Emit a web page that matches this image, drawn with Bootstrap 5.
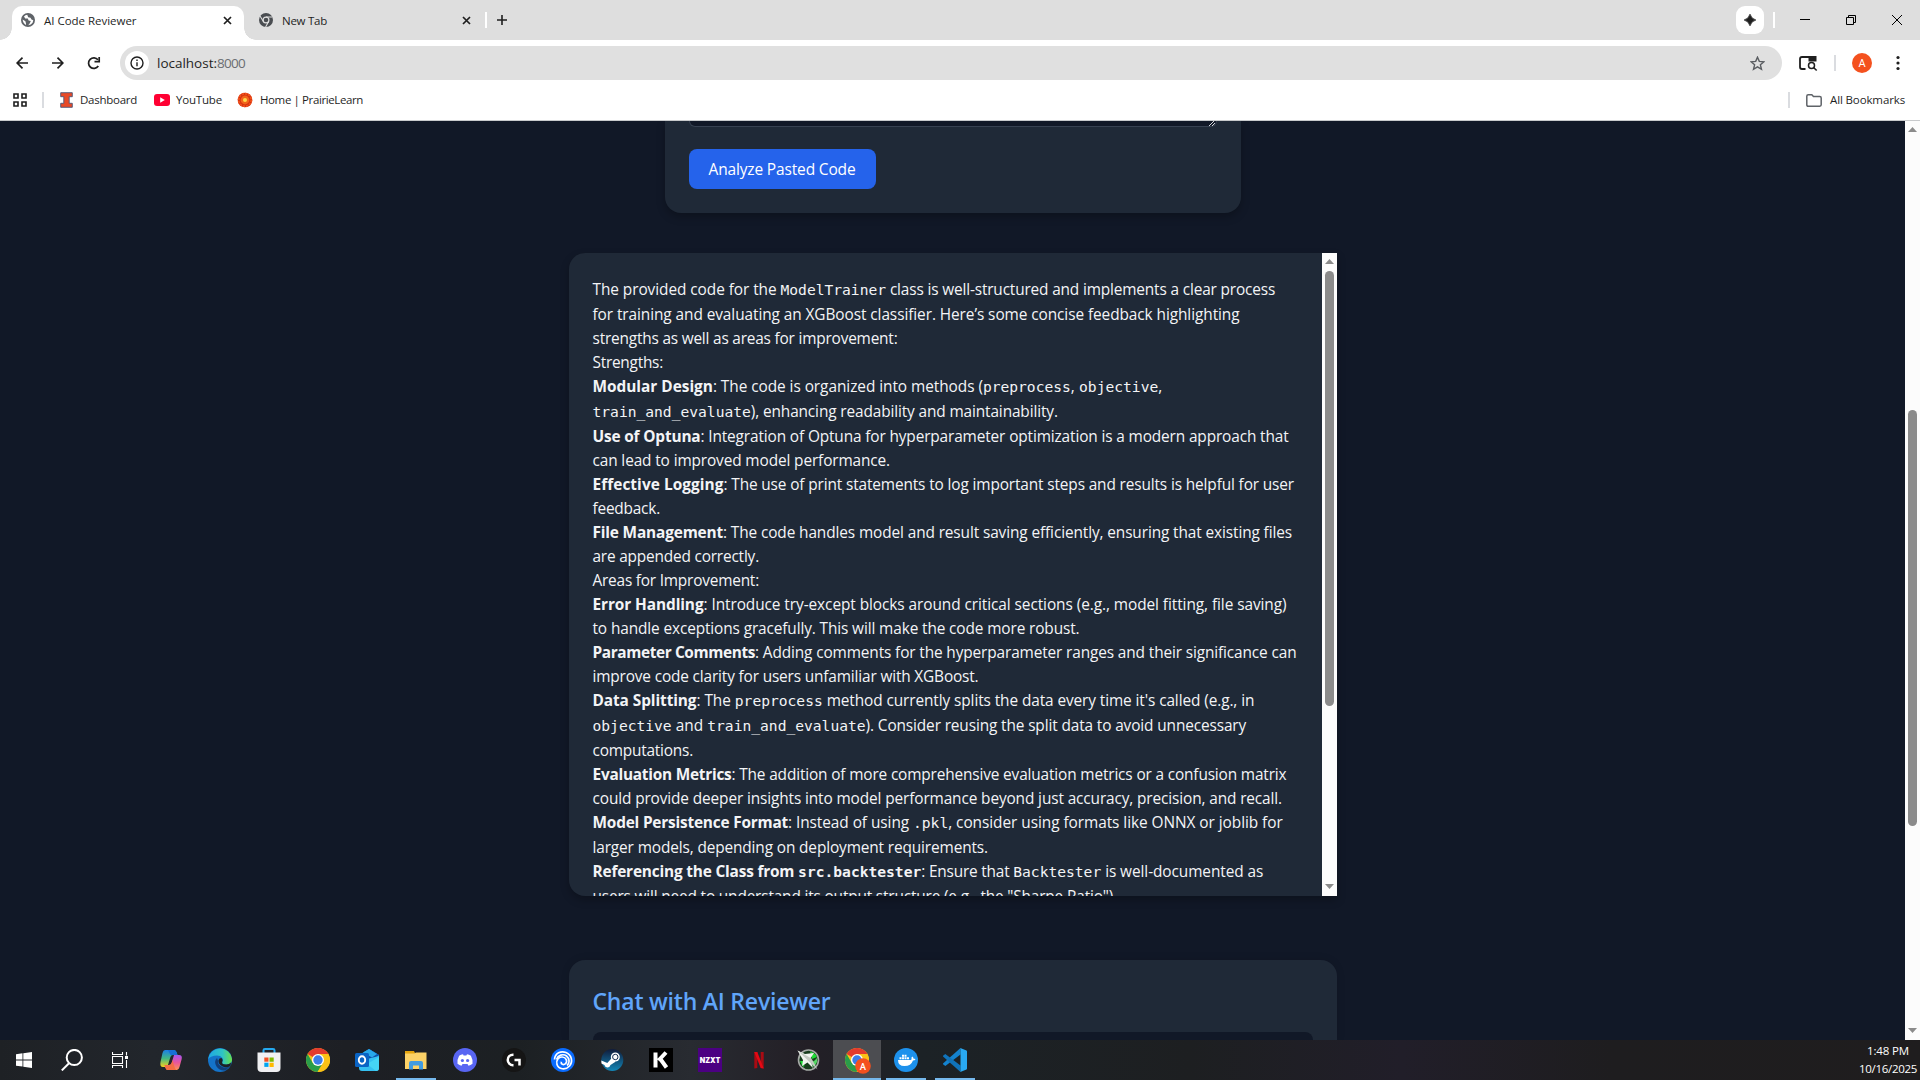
<!DOCTYPE html>
<html lang="en">
<head>
<meta charset="utf-8">
<title>AI Code Reviewer</title>
<link href="https://cdn.jsdelivr.net/npm/bootstrap@5.3.0/dist/css/bootstrap.min.css" rel="stylesheet">
<style>
body{width:1920px;height:1080px;overflow:hidden;font-family:"Open Sans","Noto Sans",sans-serif;background:#111827;line-height:1}
svg{display:block;flex:none}
[data-w]{white-space:pre}
/* browser chrome */
.tabstrip{height:40px;background:#dedede;padding-left:12px;font-size:11.5px;color:#1f1f1f}
.tab-on{position:relative;width:232px;height:34px;margin-top:6px;background:#fff;border-radius:10px 10px 0 0;padding:0 12px 6px 9px}
.tab-on::before,.tab-on::after{content:"";position:absolute;bottom:0;width:12px;height:12px}
.tab-on::before{left:-12px;background:radial-gradient(circle at 0 0,#dedede 11.5px,#fff 12px)}
.tab-on::after{right:-12px;background:radial-gradient(circle at 100% 0,#dedede 11.5px,#fff 12px)}
.tab-off{width:241px;height:34px;margin-top:6px;padding:0 14px 6px 15px}
.tab-name{margin-left:9px;padding-top:1px}
.vbar{width:2px;height:16px;background:#dadce0;flex:none}
.spark{width:28px;height:28px;border-radius:9px;background:#fff}
.toolbar-row{height:46px;background:#fff;padding-left:14px;color:#1f1f1f}
.omni{width:1662px;height:34px;border-radius:17px;background:#e0e0e0;padding:0 17px 0 5px;margin-left:18px;font-size:13.5px}
.info-dot{width:24px;height:24px;border-radius:50%;background:#fff;margin-right:8px}
.bookmarks{height:34px;background:#fff;padding:0 15px 6px 13px;font-size:11.5px;color:#1f1f1f}
.chrome-line{height:1px;background:#c8cacc}
/* page */
.view{height:919px}
.surface{background:#1f2937;box-shadow:0 4px 8px rgba(0,0,0,.25)}
.paste-card{width:576px;height:92px;margin-left:664.5px;border-radius:0 0 16px 16px;padding:0 24px}
.paste-area{width:528px;height:6px;background:#111827;border:1px solid #374151;border-top:0;border-radius:0 0 8px 8px}
.btn-go{width:187px;height:40px;margin-top:22px;border-radius:8px;background:#2563eb;color:#fff;font-size:15.5px;line-height:1;padding:1px 0 0;border:0}
.btn-go:hover{background:#2563eb;color:#fff}
.review{width:768px;height:643px;margin:40px 0 0 568.5px;border-radius:16px 0 0 16px;overflow:hidden}
.prose-box{padding:24px 0 0 24px;font-size:15.4px;color:#f3f4f6}
.ln{height:24px;line-height:26px;white-space:pre}
.ln-c{height:25px;line-height:25px}
.ln code{font-family:"DejaVu Sans Mono",monospace;font-size:14.62px;color:inherit;line-height:1}
.sbar{width:15px;background:#fcfcfc;flex:none}
.thumb{width:9px;border-radius:5px;background:#8b8b8b}
.chat{width:768px;height:81px;margin:64px 0 0 568.5px;border-radius:16px 16px 0 0;padding:24px 24px 0;box-shadow:0 0 8px rgba(0,0,0,.12)}
.chat-title{font-size:23px;font-weight:600;color:#60a5fa;line-height:34px;height:48px;margin:0}
.chat-log{height:9px;background:#111827;border-radius:8px 8px 0 0}
/* taskbar */
.taskbar{height:40px;background:linear-gradient(90deg,#1e2125 0,#22262c 8%,#1d1f24 18%,#1c2023 27%,#282b31 36%,#231f26 42%,#1c2226 48%,#1d1f21 62%,#211e29 73%,#1e1d1f 84%,#1f1d1e);color:#fff}
.task{width:48px;height:40px;flex:none}
.run{border-bottom:2px solid #76b9ed;width:40px;margin:0 4px}
.run svg{margin-top:2px}
.active-app{width:48px;margin:0;background:#4c4d51}
.clock{font-size:11.5px;padding:2px 3px 0 0}
.clock div{height:18px;line-height:18px}
</style>
</head>
<body class="d-flex flex-column">
<svg width="0" height="0" class="position-absolute">
<defs>
<linearGradient id="cpB" x2="0" y2="1"><stop stop-color="#a655f0"/><stop offset=".5" stop-color="#e9559b"/><stop offset="1" stop-color="#ff9350"/></linearGradient>
<linearGradient id="cpC" x2="0" y2="1"><stop stop-color="#1b7ee8"/><stop offset=".5" stop-color="#42b883"/><stop offset="1" stop-color="#f5d11e"/></linearGradient>
<linearGradient id="edA" x2="1"><stop stop-color="#1fa7e3"/><stop offset=".6" stop-color="#2fc4c4"/><stop offset="1" stop-color="#6be04a"/></linearGradient>
<linearGradient id="stm" x2="0" y2="1"><stop stop-color="#101b3a"/><stop offset="1" stop-color="#1387b8"/></linearGradient>
<symbol id="chrome" viewBox="0 0 24 24"><circle cx="12" cy="12" r="12" fill="#fbc116"/><path d="M12 12 1.6 6A12 12 0 0 1 22.4 6H12Z" fill="#e33b2e"/><path d="M1.6 6A12 12 0 0 0 11.5 24L17.2 15 12 12 6.8 15Z" fill="#2a9d4a"/><path d="M12 6.2H22.5A12 12 0 0 1 11.6 24L17 15Z" fill="#fbc116"/><circle cx="12" cy="12" r="6" fill="#fff"/><circle cx="12" cy="12" r="4.7" fill="#3b7de9"/></symbol>
</defs>
</svg>

<header>
 <div class="tabstrip d-flex align-items-start">
  <div class="tab-on d-flex align-items-center">
   <svg width="14" height="14" viewBox="0 0 14 14"><circle cx="7" cy="7" r="7" fill="#5f6368"/><path d="M6.200 1.800Q4.300 2 3 3.600L4.200 5.400 6.800 5.600 7.600 7.600 9.800 8 8.800 10.200 7.200 12.200Q10 12 11.600 9.800L12.300 7.200 10.500 6.600 9.500 4.800 7.200 4.200ZM1.600 6.600 4.400 8.200 5 10.400 5 12Q2 10.600 1.600 6.600Z" fill="#fff"/></svg>
   <span class="tab-name"><span data-w="92.5">AI Code Reviewer</span></span>
   <svg class="ms-auto" width="9" height="9" viewBox="0 0 9 9"><path d="m1 1 7 7M8 1 1 8" stroke="#1f1f1f" stroke-width="1.7"/></svg>
  </div>
  <div class="tab-off d-flex align-items-center">
   <svg width="14" height="14" viewBox="0 0 14 14"><circle cx="7" cy="7" r="7" fill="#4a4d51"/><circle cx="7" cy="7" r="2.9" fill="none" stroke="#dedede" stroke-width="1.2"/><path d="M7 4H13.4M4.4 8.5 1 3M9.6 8.5 6.6 14" stroke="#dedede" stroke-width="1.1"/></svg>
   <span class="tab-name"><span data-w="45">New Tab</span></span>
   <svg class="ms-auto" width="9" height="9" viewBox="0 0 9 9"><path d="m1 1 7 7M8 1 1 8" stroke="#1f1f1f" stroke-width="1.7"/></svg>
  </div>
  <div class="d-flex align-items-center h-100">
   <i class="vbar bg-white"></i>
   <svg class="ms-2" width="14" height="12" viewBox="-1.500 0 14 12"><path d="M5.500 1v10M.5 6h10" stroke="#1f1f1f" stroke-width="1.6"/></svg>
  </div>
  <div class="d-flex align-items-center h-100 ms-auto pe-3">
   <span class="spark d-flex align-items-center justify-content-center"><svg width="14" height="14" viewBox="0 0 14 14"><path d="M7 1.200Q8.200 5.800 12.800 7 8.200 8.200 7 12.800 5.800 8.200 1.200 7 5.800 5.800 7 1.200Z" fill="#1f1f1f" stroke="#1f1f1f" stroke-width=".8"/></svg></span>
   <i class="vbar bg-white" style="margin-left:9px"></i>
   <svg width="129" height="14" viewBox="1775 13 129 14" fill="none" stroke="#000"><path d="M1800 19.5h10M1846.500 17.500h7v7h-7zM1848.500 17.500v-2h7v7h-2M1892 15l10 10M1902 15l-10 10"/></svg>
  </div>
 </div>
 <div class="toolbar-row d-flex align-items-center">
  <svg width="88" height="16" viewBox="14 0 88 16" fill="none" stroke="#1f1f1f" stroke-width="1.7"><path d="M28 8H17.500M22.500 2.700 17.200 8l5.300 5.300M52 8h10.500M57.500 2.700 62.800 8l-5.300 5.300M98.300 11A5.300 5.300 0 1 1 98 4.800"/><path d="M99.200 2v4.700h-4.700"/></svg>
  <div class="omni d-flex align-items-center">
   <span class="info-dot d-flex align-items-center justify-content-center"><svg width="14" height="14" viewBox="0 0 14 14" fill="none" stroke="#1f1f1f" stroke-width="1.4"><circle cx="7" cy="7" r="6"/><path d="M7 6.300v4M7 3.500v1.500"/></svg></span>
   <span class="pt-1" style="margin-top:-2px"><span data-w="60">localhost:</span><span data-w="28" style="color:#6b6e72">8000</span></span>
   <svg class="ms-auto" width="15" height="15" viewBox="0 0 15 15"><path d="m7.500 1.200 1.800 4.200 4.600.4-3.500 3 1.100 4.500-4-2.400-4 2.400 1.100-4.500-3.500-3 4.600-.4Z" fill="none" stroke="#5a5d61" stroke-width="1.400"/></svg>
  </div>
  <svg width="138" height="20" viewBox="1782 53 138 20"><path d="M1805.500 69h-3.500q-2 0-2-2v-8q0-2 2-2h14" fill="none" stroke="#1f1f1f" stroke-width="1.800"/><path d="M1808.500 56h8v5.500h-8z" fill="#1f1f1f"/><circle cx="1811.500" cy="65.500" r="3" fill="#fff" stroke="#1f1f1f" stroke-width="1.500"/><path d="m1813.500 67.500 3.200 3" stroke="#1f1f1f" stroke-width="1.600"/><path d="M1834 55h2v16h-2z" fill="#dadce0"/><circle cx="1862" cy="63" r="10" fill="#f4511e"/><text x="1862" y="67" text-anchor="middle" font-family="Roboto" font-size="11" fill="#fff">A</text><g fill="#1f1f1f"><circle cx="1898" cy="57.500" r="1.600"/><circle cx="1898" cy="63" r="1.600"/><circle cx="1898" cy="68.500" r="1.600"/></g></svg>
 </div>
 <div class="bookmarks d-flex align-items-center">
  <svg width="14" height="14" viewBox="0 0 14 14" fill="none" stroke="#1f1f1f" stroke-width="1.600"><path d="M1 1h4v4H1zM9 1h4v4H9zM1 9h4v4H1zM9 9h4v4H9z"/></svg>
  <i class="vbar" style="margin:0 16px 0 15px"></i>
  <svg width="13" height="16" viewBox="0 0 13 16"><path d="M.7.700h11.600v4H9.200v6.600h3.100v4H.7v-4h3.100V4.700H.7Z" fill="#e84a27" stroke="#4b5677" stroke-width=".9"/></svg>
  <span style="margin-left:7px"><span data-w="57">Dashboard</span></span>
  <svg style="margin-left:17px" width="16" height="12" viewBox="0 0 16 12"><rect width="16" height="12" rx="3" fill="#ff0033"/><path d="m6.200 3.300 4.600 2.700-4.600 2.700Z" fill="#fff"/></svg>
  <span style="margin-left:6px"><span data-w="46">YouTube</span></span>
  <svg style="margin-left:15px" width="16" height="16" viewBox="0 0 16 16"><circle cx="8" cy="8" r="7.300" fill="#d3300f"/><circle cx="8" cy="8" r="6.300" fill="none" stroke="#f0511c" stroke-width="2" stroke-dasharray="2.300 .9"/><circle cx="8" cy="8" r="4.400" fill="#f2641a"/><circle cx="8" cy="8" r="2" fill="#ffd84a"/></svg>
  <span style="margin-left:7px"><span data-w="103">Home | PrairieLearn</span></span>
  <i class="vbar ms-auto" style="margin-right:16px"></i>
  <svg width="16" height="13" viewBox="0 0 16 13"><path d="M.8 2.200Q.8.800 2.200.800h3.600l1.700 1.800h6.300q1.400 0 1.400 1.400v6.800q0 1.400-1.400 1.400H2.200q-1.400 0-1.400-1.400Z" fill="none" stroke="#5f6368" stroke-width="1.500"/></svg>
  <span class="ms-2"><span data-w="75">All Bookmarks</span></span>
 </div>
 <div class="chrome-line"></div>
</header>

<div class="view d-flex overflow-hidden">
 <main class="flex-grow-1">
  <section class="surface paste-card">
   <div class="paste-area d-flex justify-content-end"><svg width="7" height="6" viewBox="0 0 7 6"><path d="M0 5 5 0M3 5l3-3" stroke="#d5d7da"/></svg></div>
   <button class="btn btn-go"><span data-w="147">Analyze Pasted Code</span></button>
  </section>

  <section class="surface review d-flex">
   <div class="prose-box flex-grow-1">
    <div class="ln ln-c"><span data-w="188">The provided code for the </span><code>ModelTrainer</code><span data-w="389"> class is well-structured and implements a clear process</span></div>
    <div class="ln"><span data-w="647">for training and evaluating an XGBoost classifier. Here’s some concise feedback highlighting</span></div>
    <div class="ln"><span data-w="305">strengths as well as areas for improvement:</span></div>
    <div class="ln"><span data-w="70.5">Strengths:</span></div>
    <div class="ln ln-c"><strong data-w="120.4">Modular Design</strong><span data-w="270">: The code is organized into methods (</span><code>preprocess</code><span data-w="8.2">, </span><code>objective</code><span>,</span></div>
    <div class="ln ln-c"><code>train_and_evaluate</code><span data-w="307">), enhancing readability and maintainability.</span></div>
    <div class="ln"><strong data-w="108">Use of Optuna</strong><span data-w="588">: Integration of Optuna for hyperparameter optimization is a modern approach that</span></div>
    <div class="ln"><span data-w="297.500">can lead to improved model performance.</span></div>
    <div class="ln"><strong data-w="131">Effective Logging</strong><span data-w="570.500">: The use of print statements to log important steps and results is helpful for user</span></div>
    <div class="ln"><span data-w="67.500">feedback.</span></div>
    <div class="ln"><strong data-w="130.500">File Management</strong><span data-w="569">: The code handles model and result saving efficiently, ensuring that existing files</span></div>
    <div class="ln"><span data-w="166.500">are appended correctly.</span></div>
    <div class="ln"><span data-w="166.500">Areas for Improvement:</span></div>
    <div class="ln"><strong data-w="111">Error Handling</strong><span data-w="583">: Introduce try-except blocks around critical sections (e.g., model fitting, file saving)</span></div>
    <div class="ln"><span data-w="487">to handle exceptions gracefully. This will make the code more robust.</span></div>
    <div class="ln"><strong data-w="162.500">Parameter Comments</strong><span data-w="541.500">: Adding comments for the hyperparameter ranges and their significance can</span></div>
    <div class="ln"><span data-w="386">improve code clarity for users unfamiliar with XGBoost.</span></div>
    <div class="ln ln-c"><strong data-w="104">Data Splitting</strong><span data-w="38.300">: The </span><code>preprocess</code><span data-w="431.500"> method currently splits the data every time it's called (e.g., in</span></div>
    <div class="ln ln-c"><code>objective</code><span data-w="35.600"> and </span><code>train_and_evaluate</code><span data-w="380.500">). Consider reusing the split data to avoid unnecessary</span></div>
    <div class="ln"><span data-w="100.500">computations.</span></div>
    <div class="ln"><strong data-w="139">Evaluation Metrics</strong><span data-w="555">: The addition of more comprehensive evaluation metrics or a confusion matrix</span></div>
    <div class="ln"><span data-w="689.500">could provide deeper insights into model performance beyond just accuracy, precision, and recall.</span></div>
    <div class="ln ln-c"><strong data-w="195.500">Model Persistence Format</strong><span data-w="125">: Instead of using </span><code>.pkl</code><span data-w="334.500">, consider using formats like ONNX or joblib for</span></div>
    <div class="ln"><span data-w="395.500">larger models, depending on deployment requirements.</span></div>
    <div class="ln ln-c"><strong data-w="205.600">Referencing the Class from </strong><code class="fw-bold">src.backtester</code><span data-w="92">: Ensure that </span><code>Backtester</code><span data-w="162"> is well-documented as</span></div>
    <div class="ln"><span data-w="524.500">users will need to understand its output structure (e.g., the "Sharpe Ratio").</span></div>
   </div>
   <div class="sbar d-flex flex-column align-items-center">
    <svg width="9" height="18" viewBox="0 0 9 18"><path d="M4.500 6 9 11H0Z" fill="#8b8b8b"/></svg>
    <div class="thumb" style="height:435px"></div>
    <svg class="mt-auto" width="9" height="18" viewBox="0 0 9 18"><path d="M4.500 11 9 6H0Z" fill="#8b8b8b"/></svg>
   </div>
  </section>

  <section class="surface chat">
   <h2 class="chat-title"><span data-w="238">Chat with AI Reviewer</span></h2>
   <div class="chat-log"></div>
  </section>
 </main>
 <div class="sbar d-flex flex-column align-items-center">
  <svg width="9" height="18" viewBox="0 0 9 18"><path d="M4.500 6 9 11H0Z" fill="#8b8b8b"/></svg>
  <div class="thumb" style="height:416px;margin-top:271px"></div>
  <svg class="mt-auto" width="9" height="18" viewBox="0 0 9 18"><path d="M4.500 11 9 6H0Z" fill="#8b8b8b"/></svg>
 </div>
</div>

<footer class="taskbar d-flex">
 <div class="d-flex">
  <div class="task d-flex align-items-center justify-content-center"><svg width="16" height="16" viewBox="0 0 16 16" fill="#fff"><path d="M0 2.200 6.500 1.300V7.500H0ZM7.300 1.200 16 0v7.500H7.300ZM0 8.400h6.500v6.200L0 13.700ZM7.300 8.400H16V16l-8.700-1.200Z"/></svg></div>
  <div class="task d-flex align-items-center justify-content-center"><svg width="22" height="22" viewBox="0 0 22 22" fill="none" stroke="#fff" stroke-width="2"><circle cx="13.300" cy="8.500" r="7.600"/><path d="M8 14.200.8 21.400"/></svg></div>
  <div class="task d-flex align-items-center justify-content-center"><svg width="17" height="16" viewBox="0 0 17 16" fill="none" stroke="#fff" stroke-width="1.100"><path d="M.5 0v2.500h10V0M.5 16v-2.500h10V16M.5 4.500h10v7H.5zM14.500 0v3.500M14.500 8v8"/><path d="M13 4h3v3h-3z" fill="#fff" stroke="none"/></svg></div>
 </div>
 <div class="d-flex" style="gap:1px;margin-left:3px">
  <div class="task d-flex align-items-center justify-content-center"><svg width="24" height="24" viewBox="0 0 24 24"><path d="M6 2h9q2 0 2.700 2.500L18.500 7H14q-2 0-2.600 2L9 17q-.7 2-2.500 2H4Q.500 19 1.500 14L3.500 5Q4.300 2 6 2Z" fill="url(#cpC)"/><path d="M9 2h6q2 0 2.700 2.500L18.500 7h-7Z" fill="#166fd6"/><path d="M18 22H9q-2 0-2.700-2.500L5.500 17H10q2 0 2.600-2L15 7h5q3.500 0 2.700 4l-2.200 8q-.8 3-2.500 3Z" fill="url(#cpB)"/><path d="M5.500 17H10q2 0 2.600-2l.9-3 2 7q.5 2 2 3H9q-2 0-2.700-2.500Z" fill="#f46d45"/></svg></div>
  <div class="task d-flex align-items-center justify-content-center"><svg width="24" height="24" viewBox="0 0 24 24"><circle cx="12" cy="12" r="12" fill="#1473c9"/><path d="M.2 11A12 12 0 0 1 24 11q.4 5.500-6 5.500-4.500 0-3.800-2.500 1.500-2 0-4.200Q12.500 7.500 9 7.500 3 7.800.2 11Z" fill="url(#edA)"/><path d="M9 10q-3.500 3.500-.5 8.500 3.500 5 9.500 3.800l4-4q-4 2-7.500.7-5-2-4.500-6.500Z" fill="#123f7a"/><path d="M22.500 18q-4.500 2.300-8.300.3-4.300-2.300-3.700-6 .5-2.300 3-2.300 2 2 .7 4-.7 2.500 4 2.500 3 0 4.800-2Z" fill="#1d2024"/></svg></div>
  <div class="task d-flex align-items-center justify-content-center"><svg width="24" height="24" viewBox="0 0 24 24"><path d="M6.500 5V2.200Q6.500 1 8 1h8q1.500 0 1.500 1.200V5" fill="none" stroke="#25a9ee" stroke-width="2"/><path d="M.500 4.500h23V20q0 4-4 4h-15q-4 0-4-4Z" fill="#f0f0f2"/><path d="M7.300 9.500h4.200v4.200H7.300z" fill="#f25022"/><path d="M12.500 9.500h4.200v4.200h-4.200z" fill="#7fba00"/><path d="M7.300 14.700h4.200v4.200H7.300z" fill="#00a4ef"/><path d="M12.500 14.700h4.200v4.200h-4.200z" fill="#ffb900"/></svg></div>
  <div class="task d-flex align-items-center justify-content-center"><svg width="24" height="24"><use href="#chrome"/></svg></div>
  <div class="task d-flex align-items-center justify-content-center"><svg width="24" height="24" viewBox="0 0 24 24"><path d="M4 7 14 1l10 6v3L14 16 4 12Z" fill="#1490df"/><path d="m14 1 10 6-8 6-7-7Z" fill="#0f4fa8"/><path d="M14 1 8 4.600l9 5L22 6Z" fill="#28a8ea"/><path d="M4 12h4l16-4v12q0 3-3 3H7q-3 0-3-3Z" fill="#35c1f1"/><path d="m24 9-12 7 9 7q3 0 3-3Z" fill="#45d5f5"/><rect y="5" width="14" height="14" rx="1.500" fill="#0a64c4"/><ellipse cx="7" cy="12" rx="3.200" ry="3.700" fill="none" stroke="#fff" stroke-width="1.900"/></svg></div>
  <div class="task run d-flex align-items-center justify-content-center"><svg width="22" height="20" viewBox="0 0 22 20"><path d="M0 1h9l1 2h11v5H0Z" fill="#e5a50e"/><path d="M0 3.500h9.500L11 2.500h10.500V19H0Z" fill="#fcd267"/><path d="M4 19.500V13q0-2 2-2h10q2 0 2 2v6.500h-4V15.500H8v4Z" fill="#419be0"/></svg></div>
  <div class="task d-flex align-items-center justify-content-center"><svg width="24" height="24" viewBox="0 0 24 24"><circle cx="12" cy="12" r="12" fill="#5865f2"/><path d="M8 6.800 10 6.300l.6 1.100h2.800l.6-1.100 2 .5 1.900.9q2 3.500 1.600 8.100-2 1.700-4 2l-1-1.700h-5l-1 1.700q-2-.3-4-2-.4-4.600 1.600-8.100Z" fill="#fff"/><circle cx="9.400" cy="12.500" r="1.600" fill="#5865f2"/><circle cx="14.600" cy="12.500" r="1.600" fill="#5865f2"/></svg></div>
  <div class="task d-flex align-items-center justify-content-center"><svg width="24" height="24" viewBox="0 0 24 24" fill="none" stroke="#fff" stroke-width="2.500"><circle cx="12" cy="12" r="12" fill="#151515" stroke="none"/><path d="M11.500 6.700H11a5.200 5.200 0 0 0 0 10.500h.5M12.500 12h5v5.500"/></svg></div>
  <div class="task d-flex align-items-center justify-content-center"><svg width="24" height="24" viewBox="0 0 24 24" fill="none" stroke="#fff" stroke-width="1.700"><circle cx="12" cy="12" r="12" fill="#0a6cff" stroke="none"/><path d="M3.500 11.500C4 5 10 2.500 15 4.500c6 2.500 7 9.500 3.500 13.500-4 4.500-11 3.300-12.500-1.500-1.300-4.500 1.800-7.800 5.300-7.500 4 .3 5.500 4.500 3.200 6.700-2.200 1.800-4.800.3-4.200-1.900"/><path d="M5.500 11.500C7 7 12 5.500 15.500 8c3.500 2.700 3.200 7.500.5 9.500"/></svg></div>
  <div class="task d-flex align-items-center justify-content-center"><svg width="24" height="24" viewBox="0 0 24 24"><circle cx="12.300" cy="12" r="11" fill="url(#stm)"/><path d="m1.300 12.500 6 2.500 5-5.500 3.200 4.300-5 3.200q-.8 2.600-3.300 2.500-2.200-.2-2.800-2.500L1.500 15.500Z" fill="#fff"/><circle cx="15.300" cy="9" r="4.500" fill="#fff"/><circle cx="15.300" cy="9" r="2.700" fill="none" stroke="#173052" stroke-width="1"/></svg></div>
  <div class="task d-flex align-items-center justify-content-center"><svg width="24" height="24" viewBox="0 0 24 24"><path d="M0 0h24v24H0z"/><path d="M6.500 4.500v15M17 4.500l-7.500 8M11 10.500l6.500 9" stroke="#fff" stroke-width="4"/></svg></div>
  <div class="task d-flex align-items-center justify-content-center"><svg width="24" height="24" viewBox="0 0 24 24"><path d="M0 0h24v24H0z" fill="#4b0082"/><text x="12" y="14.700" text-anchor="middle" textLength="20.500" lengthAdjust="spacingAndGlyphs" font-family="Inter" font-weight="900" font-size="7.800" fill="#fff">NZXT</text></svg></div>
  <div class="task d-flex align-items-center justify-content-center"><svg width="24" height="24" viewBox="0 0 24 24"><path d="M7.300 4h3v16l-3 .5ZM13.700 4h3v16.500l-3-.5Z" fill="#a90b13"/><path d="M7.300 4h3l6.400 16.500-3-.5Z" fill="#e50914"/></svg></div>
  <div class="task d-flex align-items-center justify-content-center"><svg width="24" height="24" viewBox="0 0 24 24"><circle cx="12.500" cy="12" r="10" fill="#173d1d" stroke="#a5aaa6" stroke-width="1.600"/><path d="M14 3.500q5 1 7 5.500l-5 2ZM4 13l5 0-1 6q-3-2-4-6Z" fill="#1edb35"/><path d="M15 14q4-1 6-4 1 6-4 9Z" fill="#54d763"/><path d="m1.500 2.500 7.500 3.500 9-1-4 6 3 9-5.500-5.500L6 18l1-6Z" fill="#f0f4ef"/><path d="m1.500 2.500 10.500 10 9.500 9-6-11Z" fill="#c3cbc2"/></svg></div>
  <div class="task run active-app d-flex align-items-center justify-content-center"><svg width="28" height="28" viewBox="-2 -2 28 28"><use href="#chrome" width="24" height="24"/><circle cx="18" cy="18" r="7.800" fill="#f4511e"/><text x="18" y="21.700" text-anchor="middle" font-family="Roboto" font-size="9.500" font-weight="500" fill="#fff">A</text></svg></div>
  <div class="task run d-flex align-items-center justify-content-center"><svg width="24" height="24" viewBox="0 0 24 24" fill="#fff"><circle cx="12" cy="12" r="12" fill="#1d91ec"/><path d="M4 12h13q.9-.5.5-2.500l.8-1q1.200 1 1.300 2.200 1.200-.2 2 .3-.7 1.500-2.600 1.500-2 5.500-8.500 5.500Q4 18 4 12Z"/><path d="M5.500 9.300h2v2h-2zM8 9.300h2v2H8zM10.500 9.300h2v2h-2zM13 9.300h2v2h-2zM8 6.800h2v2H8zM10.500 6.800h2v2h-2z"/></svg></div>
  <div class="task run d-flex align-items-center justify-content-center"><svg width="24" height="24" viewBox="0 0 24 24"><path d="M17.500 0v6.500L2.300 18 0 16.300v-.8Z" fill="#1483cf"/><path d="M17.500 24v-6.500L2.300 6 0 7.700v.8Z" fill="#1073ba"/><path d="m17.300 0 6.200 2.500q.5.300.5 1v17q0 .7-.5 1L17.300 24q.2-.3.200-1V1q0-.7-.2-1Z" fill="#29a9f2"/></svg></div>
 </div>
 <div class="clock ms-auto text-end"><div class="pe-2"><span data-w="42">1:48 PM</span></div><div><span data-w="58">10/16/2025</span></div></div>
</footer>

<script src="https://cdn.jsdelivr.net/npm/bootstrap@5.3.0/dist/js/bootstrap.bundle.min.js"></script>
<script>
// Track each run of text out to its set measure.
document.querySelectorAll('[data-w]').forEach(el => {
  const gap = parseFloat(el.dataset.w) - el.getBoundingClientRect().width;
  el.style.letterSpacing = (gap / el.textContent.length) + 'px';
});
</script>
</body>
</html>
